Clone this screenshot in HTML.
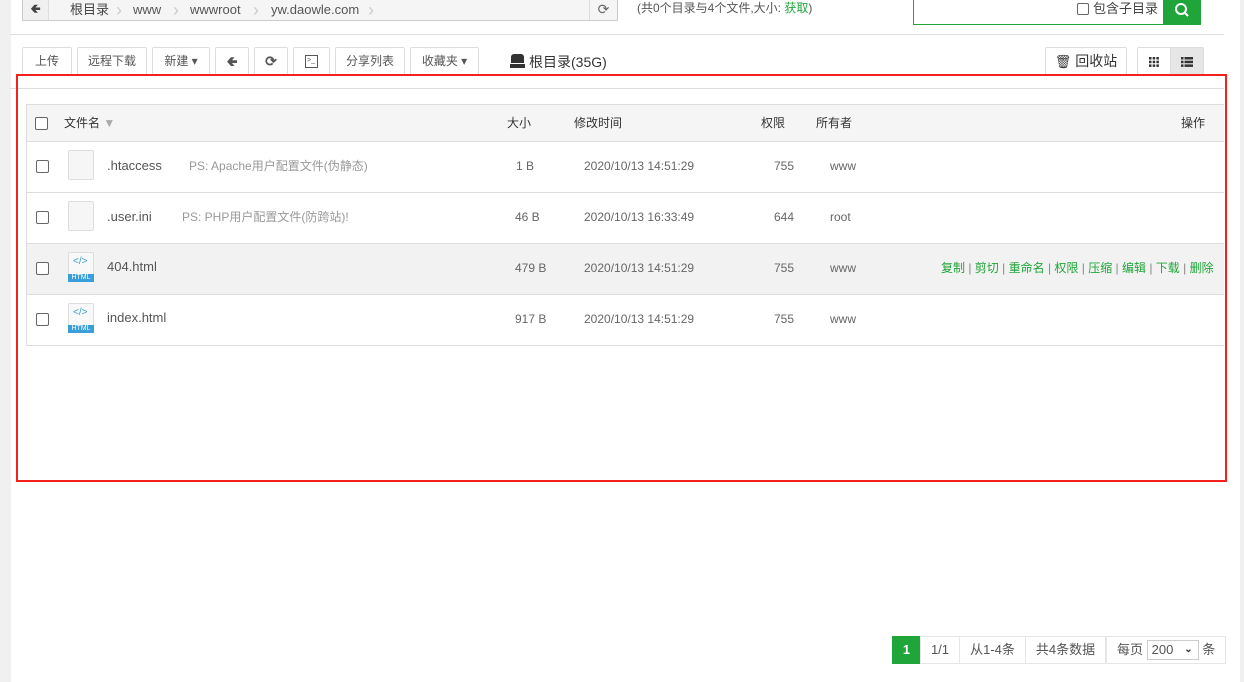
<!DOCTYPE html>
<html><head><meta charset="utf-8"><style>
*{box-sizing:border-box;margin:0;padding:0}
body{width:1244px;height:682px;overflow:hidden;background:#fff;font-family:"Liberation Sans","Noto Sans CJK SC",sans-serif;font-size:12px;color:#555;position:relative}
.a{position:absolute}
.bc{position:absolute;top:0;line-height:19px;font-size:13px;color:#555}
.btn{position:absolute;top:47px;height:28px;border:1px solid #ddd;border-radius:2px;background:#fff;line-height:26px;text-align:center;color:#555;font-size:12px}
.row{position:absolute;left:26px;width:1198px;height:51px;border-bottom:1px solid #ddd;border-left:1px solid #ddd}
.row span{position:absolute;top:16px;line-height:16px;font-size:12px;color:#666}
.cb{position:absolute;left:9px;width:13px;height:13px;border:1px solid #666;border-radius:2px;background:#fff}
.fi{position:absolute;left:41px;top:8px;width:26px;height:30px;background:#f6f6f6;border:1px solid #ddd;border-radius:2px}
.hi{position:absolute;left:41px;top:8px;width:26px;height:30px;background:#f8f8f8;border:1px solid #ddd;border-radius:2px}
.hi b{position:absolute;left:-1px;right:-1px;bottom:-1px;height:8px;background:#3a9fd8;color:#fff;font-size:7px;line-height:8px;text-align:center;font-weight:normal}
.hi i{position:absolute;left:4px;top:3px;color:#3a9fd8;font-size:10px;font-style:normal;line-height:12px}
.pg{position:absolute;top:636px;height:28px;border:1px solid #e6e6e6;line-height:26px;text-align:center;color:#555;font-size:13px;background:#fff}
.h{position:absolute;top:115px;line-height:16px;color:#333}
</style></head><body>
<div class="a" style="left:0;top:0;width:11px;height:682px;background:#f0f0f0"></div>
<div class="a" style="left:1240px;top:0;width:4px;height:682px;background:#f0f0f0"></div>

<div class="a" style="left:22px;top:-1px;width:596px;height:22px;border:1px solid #ccc;background:#f5f5f5"></div>
<div class="a" style="left:23px;top:0;width:26px;height:20px;background:#f0f0f0;border-right:1px solid #ddd;text-align:center;line-height:18px;font-size:13px;color:#444">&#129152;</div>
<div class="bc" style="left:70px;color:#444">根目录</div>
<div class="bc" style="left:133px">www</div>
<div class="bc" style="left:190px">wwwroot</div>
<div class="bc" style="left:271px">yw.daowle.com</div>
<div class="a" style="left:116px;top:0;color:#ccc;font-size:18px;line-height:20px">›</div>
<div class="a" style="left:173px;top:0;color:#ccc;font-size:18px;line-height:20px">›</div>
<div class="a" style="left:253px;top:0;color:#ccc;font-size:18px;line-height:20px">›</div>
<div class="a" style="left:368px;top:0;color:#ccc;font-size:18px;line-height:20px">›</div>
<div class="a" style="left:589px;top:0;width:28px;height:20px;border-left:1px solid #ddd;text-align:center;line-height:18px;font-size:14px;color:#666">⟳</div>
<div class="a" style="left:637px;top:0;line-height:16px;font-size:12px;color:#555">(共0个目录与4个文件,大小: <span style="color:#20a53a">获取</span>)</div>

<div class="a" style="left:913px;top:-1px;width:288px;height:26px;border:1px solid #20a53a"></div>
<div class="a" style="left:1077px;top:3px;width:12px;height:12px;border:1px solid #666;border-radius:2px"></div>
<div class="a" style="left:1093px;top:1px;line-height:16px;font-size:13px;color:#444">包含子目录</div>
<div class="a" style="left:1163px;top:-1px;width:38px;height:26px;background:#20a53a"></div>
<svg class="a" style="left:1174px;top:2px" width="16" height="16" viewBox="0 0 16 16"><circle cx="7" cy="7" r="5" fill="none" stroke="#fff" stroke-width="2"/><path d="M10.5 10.5L14 14" stroke="#fff" stroke-width="2"/></svg>

<div class="a" style="left:10px;top:34px;width:1214px;height:1px;background:#ddd"></div>

<div class="btn" style="left:22px;width:50px">上传</div>
<div class="btn" style="left:77px;width:70px">远程下载</div>
<div class="btn" style="left:152px;width:58px">新建 ▾</div>
<div class="btn" style="left:215px;width:34px;font-size:14px">&#129152;</div>
<div class="btn" style="left:254px;width:34px;font-size:14px;font-weight:bold">⟳</div>
<div class="btn" style="left:293px;width:37px"><span style="display:inline-block;width:13px;height:13px;border:1px solid #555;vertical-align:middle;font-size:7px;line-height:9px;text-align:left;padding-left:1px">&gt;_</span></div>
<div class="btn" style="left:335px;width:70px">分享列表</div>
<div class="btn" style="left:410px;width:69px">收藏夹 ▾</div>
<div class="a" style="left:511px;top:54px;width:13px;height:9px;background:#333;border-radius:3px 3px 0 0"></div>
<div class="a" style="left:510px;top:64px;width:15px;height:4px;background:#333"></div>
<div class="a" style="left:529px;top:53px;line-height:18px;font-size:14px;color:#333">根目录(35G)</div>
<div class="btn" style="left:1045px;width:82px;font-size:14px;color:#333"><span style="font-size:13px">🗑</span> 回收站</div>
<div class="btn" style="left:1137px;width:34px;border-radius:2px 0 0 2px">
<svg width="10" height="10" viewBox="0 0 10 10" style="vertical-align:middle"><g fill="#333"><rect x="0" y="0" width="2.5" height="2.5"/><rect x="3.7" y="0" width="2.5" height="2.5"/><rect x="7.4" y="0" width="2.5" height="2.5"/><rect x="0" y="3.7" width="2.5" height="2.5"/><rect x="3.7" y="3.7" width="2.5" height="2.5"/><rect x="7.4" y="3.7" width="2.5" height="2.5"/><rect x="0" y="7.4" width="2.5" height="2.5"/><rect x="3.7" y="7.4" width="2.5" height="2.5"/><rect x="7.4" y="7.4" width="2.5" height="2.5"/></g></svg></div>
<div class="btn" style="left:1170px;width:34px;background:#e6e6e6;border-radius:0 2px 2px 0">
<svg width="12" height="10" viewBox="0 0 12 10" style="vertical-align:middle"><g fill="#333"><rect x="0" y="0" width="2.5" height="2.5"/><rect x="3.5" y="0" width="8.5" height="2.5"/><rect x="0" y="3.7" width="2.5" height="2.5"/><rect x="3.5" y="3.7" width="8.5" height="2.5"/><rect x="0" y="7.4" width="2.5" height="2.5"/><rect x="3.5" y="7.4" width="8.5" height="2.5"/></g></svg></div>

<div class="a" style="left:10px;top:88px;width:1214px;height:1px;background:#ddd"></div>

<div class="a" style="left:26px;top:104px;width:1198px;height:38px;background:#f5f5f5;border:1px solid #ddd;border-right:none"></div>
<div class="cb" style="left:35px;top:117px"></div>
<div class="h" style="left:64px">文件名 <span style="color:#aaa">▼</span></div>
<div class="h" style="left:507px">大小</div>
<div class="h" style="left:574px">修改时间</div>
<div class="h" style="left:761px">权限</div>
<div class="h" style="left:816px">所有者</div>
<div class="h" style="left:1181px">操作</div>

<div class="row" style="top:142px"><div class="cb" style="top:18px"></div><div class="fi"></div><span style="left:80px;color:#555;font-size:13px">.htaccess</span><span style="left:162px;color:#999">PS: Apache用户配置文件(伪静态)</span><span style="left:489px">1 B</span><span style="left:557px">2020/10/13 14:51:29</span><span style="left:747px">755</span><span style="left:803px">www</span></div>
<div class="row" style="top:193px"><div class="cb" style="top:18px"></div><div class="fi"></div><span style="left:80px;color:#555;font-size:13px">.user.ini</span><span style="left:155px;color:#999">PS: PHP用户配置文件(防跨站)!</span><span style="left:488px">46 B</span><span style="left:557px">2020/10/13 16:33:49</span><span style="left:747px">644</span><span style="left:803px">root</span></div>
<div class="row" style="top:244px;background:#f2f2f2"><div class="cb" style="top:18px"></div><div class="hi"><i>&lt;/&gt;</i><b>HTML</b></div><span style="left:80px;color:#555;top:15px;font-size:13px">404.html</span><span style="left:488px">479 B</span><span style="left:557px">2020/10/13 14:51:29</span><span style="left:747px">755</span><span style="left:803px">www</span><span style="left:914px;color:#20a53a">复制 <i style="color:#888;font-style:normal">|</i> 剪切 <i style="color:#888;font-style:normal">|</i> 重命名 <i style="color:#888;font-style:normal">|</i> 权限 <i style="color:#888;font-style:normal">|</i> 压缩 <i style="color:#888;font-style:normal">|</i> 编辑 <i style="color:#888;font-style:normal">|</i> 下载 <i style="color:#888;font-style:normal">|</i> 删除</span></div>
<div class="row" style="top:295px"><div class="cb" style="top:18px"></div><div class="hi"><i>&lt;/&gt;</i><b>HTML</b></div><span style="left:80px;color:#555;top:15px;font-size:13px">index.html</span><span style="left:488px">917 B</span><span style="left:557px">2020/10/13 14:51:29</span><span style="left:747px">755</span><span style="left:803px">www</span></div>

<div class="a" style="left:16px;top:74px;width:1211px;height:408px;border:2px solid #f5221b"></div>

<div class="pg" style="left:892px;width:29px;background:#20a53a;border-color:#20a53a;color:#fff;font-weight:bold">1</div>
<div class="pg" style="left:920px;width:40px">1/1</div>
<div class="pg" style="left:959px;width:67px">从1-4条</div>
<div class="pg" style="left:1025px;width:81px">共4条数据</div>
<div class="pg" style="left:1106px;width:120px;text-align:left;padding-left:10px">每页 <span style="display:inline-block;width:52px;height:20px;border:1px solid #ccc;line-height:18px;vertical-align:middle;padding-left:4px;position:relative;top:-1px">200 <b style="position:absolute;right:5px;font-size:10px;color:#333">⌄</b></span> 条</div>
</body></html>
